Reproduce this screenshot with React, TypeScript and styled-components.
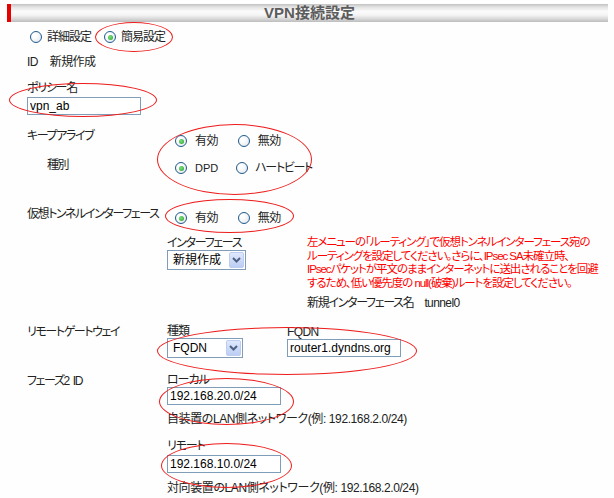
import styled, { createGlobalStyle } from "styled-components";

const GlobalStyle = createGlobalStyle`
  html, body {
    margin: 0;
    padding: 0;
    background: #fdfefd;
  }
  body {
    font-family: "Liberation Sans", "Noto Sans CJK JP", sans-serif;
    font-size: 12px;
    line-height: 14px;
    color: #222;
    font-feature-settings: "palt";
    letter-spacing: -0.6px;
  }
`;

export default function App() {
  return (
    <>
      <GlobalStyle />
      <Page>
        <Header>VPN接続設定</Header>

        <ModeRow>
          <Option $gap={5}>
            <Radio />
            詳細設定
          </Option>
          <Option $gap={5}>
            <Radio $checked />
            簡易設定
          </Option>
        </ModeRow>

        <IdRow>
          <span>ID</span>
          <span>新規作成</span>
        </IdRow>

        <Field>
          <Kana>ポリシー名</Kana>
          <TextInput defaultValue="vpn_ab" />
        </Field>

        <FormRow $mt={14}>
          <RowLabel>キープアライブ</RowLabel>
          <RadioGroup $mt={5} $gap={20}>
            <Option $gap={8}>
              <Radio $checked />
              有効
            </Option>
            <Option $gap={8}>
              <Radio />
              無効
            </Option>
          </RadioGroup>
        </FormRow>

        <FormRow $mt={10}>
          <RowLabel $indent={20}>種別</RowLabel>
          <RadioGroup $mt={3} $gap={18}>
            <Option $gap={8}>
              <Radio $checked />
              <Small>DPD</Small>
            </Option>
            <Option $gap={7}>
              <Radio />
              <Kana>ハートビート</Kana>
            </Option>
          </RadioGroup>
        </FormRow>

        <FormRow $mt={32}>
          <RowLabel>仮想トンネルインターフェース</RowLabel>
          <RadioGroup $mt={4} $gap={20}>
            <Option $gap={8}>
              <Radio $checked />
              有効
            </Option>
            <Option $gap={8}>
              <Radio />
              無効
            </Option>
          </RadioGroup>
        </FormRow>

        <InterfaceBlock>
          <FieldColumn $w={140}>
            <Kana>インターフェース</Kana>
            <SelectBox $w={79}>
              <span>新規作成</span>
              <SelectArrow>
                <Chevron />
              </SelectArrow>
            </SelectBox>
          </FieldColumn>
          <Notice>
            左メニューの「ルーティング」で仮想トンネルインターフェース宛の
            <br />
            ルーティングを設定してください。さらに、IPsec SA未確立時、
            <br />
            IPsecパケットが平文のままインターネットに送出されることを回避
            <br />
            するため、低い優先度の null(破棄)ルートを設定してください。
          </Notice>
        </InterfaceBlock>

        <InterfaceName>
          <Kana>新規インターフェース名</Kana>
          <span>tunnel0</span>
        </InterfaceName>

        <FormRow $mt={15}>
          <RowLabel $w={140}>リモートゲートウェイ</RowLabel>
          <FieldColumn $w={120}>
            <TightLabel>種類</TightLabel>
            <SelectBox $w={76}>
              <span>FQDN</span>
              <SelectArrow>
                <Chevron />
              </SelectArrow>
            </SelectBox>
          </FieldColumn>
          <FieldColumn>
            <span>FQDN</span>
            <TextInput defaultValue="router1.dyndns.org" />
          </FieldColumn>
        </FormRow>

        <FormRow $mt={16}>
          <RowLabel $w={140}>
            フェーズ2<Gap />ID
          </RowLabel>
          <FieldColumn>
            <TightLabel>ローカル</TightLabel>
            <TextInput defaultValue="192.168.20.0/24" />
            <Hint $mt={7}>自装置のLAN側ネットワーク(例: 192.168.2.0/24)</Hint>
            <SubLabel>リモート</SubLabel>
            <TextInput defaultValue="192.168.10.0/24" />
            <Hint $mt={8}>対向装置のLAN側ネットワーク(例: 192.168.2.0/24)</Hint>
          </FieldColumn>
        </FormRow>

        <Mark $x={95} $y={22} $w={78} $h={30} />
        <Mark $x={9} $y={83} $w={148} $h={34} />
        <Mark $x={157} $y={124} $w={155} $h={71} />
        <Mark $x={165} $y={199} $w={129} $h={34} />
        <Mark $x={157} $y={327} $w={260} $h={48} />
        <Mark $x={159} $y={378} $w={135} $h={47} />
        <Mark $x={161} $y={443} $w={131} $h={45} />
      </Page>
    </>
  );
}

function Chevron() {
  return (
    <svg width="9" height="6" viewBox="0 0 9 6">
      <path d="M1 1 L4.5 4.5 L8 1" fill="none" stroke="#4d6185" strokeWidth="2" />
    </svg>
  );
}

const Page = styled.div`
  position: relative;
  width: 614px;
  height: 498px;
  overflow: hidden;
`;

const Header = styled.div`
  margin: 4px 6px 0 7px;
  height: 18px;
  border-left: 4px solid #e60000;
  background: linear-gradient(
    to bottom,
    #c2c2c2 0%,
    #e4e4e4 18%,
    #fbfbfb 42%,
    #f4f4f4 62%,
    #d6d6d6 84%,
    #bcbcbc 100%
  );
  display: flex;
  align-items: center;
  justify-content: center;
  font-size: 15px;
  font-weight: bold;
  color: #5c5c5c;
  letter-spacing: 0;
`;

const ModeRow = styled.div`
  display: flex;
  align-items: center;
  gap: 13px;
  height: 14px;
  margin-top: 8px;
  padding-left: 30px;
  letter-spacing: -1px;
`;

const Option = styled.label<{ $gap: number }>`
  display: inline-flex;
  align-items: center;
  gap: ${(p) => p.$gap}px;
  white-space: nowrap;
`;

const Radio = styled.span<{ $checked?: boolean }>`
  position: relative;
  width: 12px;
  height: 12px;
  box-sizing: border-box;
  border: 1px solid #1f5a8c;
  border-radius: 50%;
  background: radial-gradient(circle at 35% 35%, #ffffff 20%, #dde2ea 100%);
  flex-shrink: 0;

  &::after {
    content: "";
    display: ${(p) => (p.$checked ? "block" : "none")};
    position: absolute;
    left: 2.5px;
    top: 2.5px;
    width: 5px;
    height: 5px;
    border-radius: 50%;
    background: radial-gradient(circle at 40% 40%, #7ee07e, #21a021);
  }
`;

const Kana = styled.span`
  letter-spacing: -1.3px;
`;

const Gap = styled.span`
  display: inline-block;
  width: 4px;
`;

const Small = styled.span`
  font-size: 11px;
  letter-spacing: 0;
`;

const IdRow = styled.div`
  display: flex;
  gap: 12px;
  margin-top: 11px;
  padding-left: 27px;
`;

const Field = styled.div`
  display: flex;
  flex-direction: column;
  align-items: flex-start;
  gap: 2px;
  margin-top: 12px;
  padding-left: 27px;
`;

const TextInput = styled.input`
  width: 114px;
  height: 18px;
  box-sizing: border-box;
  margin: 0;
  padding: 0 2px;
  border: 1px solid #7f9db9;
  background: #fff;
  font-family: "Liberation Sans", "Noto Sans CJK JP", sans-serif;
  font-size: 12px;
  letter-spacing: 0;
  color: #000;
  outline: none;
`;

const FormRow = styled.div<{ $mt: number }>`
  display: flex;
  align-items: flex-start;
  margin-top: ${(p) => p.$mt}px;
  padding-left: 27px;
`;

const RowLabel = styled.div<{ $indent?: number; $w?: number }>`
  width: ${(p) => p.$w ?? 148}px;
  padding-left: ${(p) => p.$indent ?? 0}px;
  box-sizing: border-box;
  flex-shrink: 0;
  white-space: nowrap;
  letter-spacing: -1.4px;
`;

const RadioGroup = styled.div<{ $mt: number; $gap: number }>`
  display: flex;
  align-items: center;
  gap: ${(p) => p.$gap}px;
  height: 14px;
  margin-top: ${(p) => p.$mt}px;
`;

const InterfaceBlock = styled.div`
  display: flex;
  align-items: flex-start;
  margin-top: 11px;
  padding-left: 167px;
`;

const FieldColumn = styled.div<{ $w?: number }>`
  display: flex;
  flex-direction: column;
  align-items: flex-start;
  width: ${(p) => (p.$w ? `${p.$w}px` : "auto")};
  flex-shrink: 0;
  white-space: nowrap;
`;

const TightLabel = styled.span`
  line-height: 13px;
  letter-spacing: -1px;
`;

const SubLabel = styled.span`
  margin-top: 13px;
  margin-bottom: 2px;
  letter-spacing: -1.2px;
`;

const Hint = styled.span<{ $mt: number }>`
  margin-top: ${(p) => p.$mt}px;
  letter-spacing: -0.4px;
`;

const SelectBox = styled.div<{ $w: number }>`
  display: flex;
  align-items: center;
  justify-content: space-between;
  width: ${(p) => p.$w}px;
  height: 20px;
  box-sizing: border-box;
  padding: 0 1px 0 5px;
  border: 1px solid #7f9db9;
  background: #fff;
  font-size: 12px;
  letter-spacing: 0;
  color: #000;
`;

const SelectArrow = styled.span`
  display: flex;
  align-items: center;
  justify-content: center;
  width: 15px;
  height: 16px;
  box-sizing: border-box;
  border: 1px solid #bccdf2;
  border-radius: 2px;
  background: linear-gradient(to bottom, #dfe8fc, #bccdf3);
`;

const Notice = styled.div`
  color: #ff0000;
  font-size: 11.5px;
  line-height: 13.5px;
  white-space: nowrap;
  letter-spacing: -1.05px;
`;

const InterfaceName = styled.div`
  display: flex;
  gap: 11px;
  margin-top: 6px;
  padding-left: 307px;
`;

const Mark = styled.div<{ $x: number; $y: number; $w: number; $h: number }>`
  position: absolute;
  left: ${(p) => p.$x}px;
  top: ${(p) => p.$y}px;
  width: ${(p) => p.$w}px;
  height: ${(p) => p.$h}px;
  box-sizing: border-box;
  border: 1px solid #ee1c1c;
  border-radius: 50%;
  pointer-events: none;
`;
